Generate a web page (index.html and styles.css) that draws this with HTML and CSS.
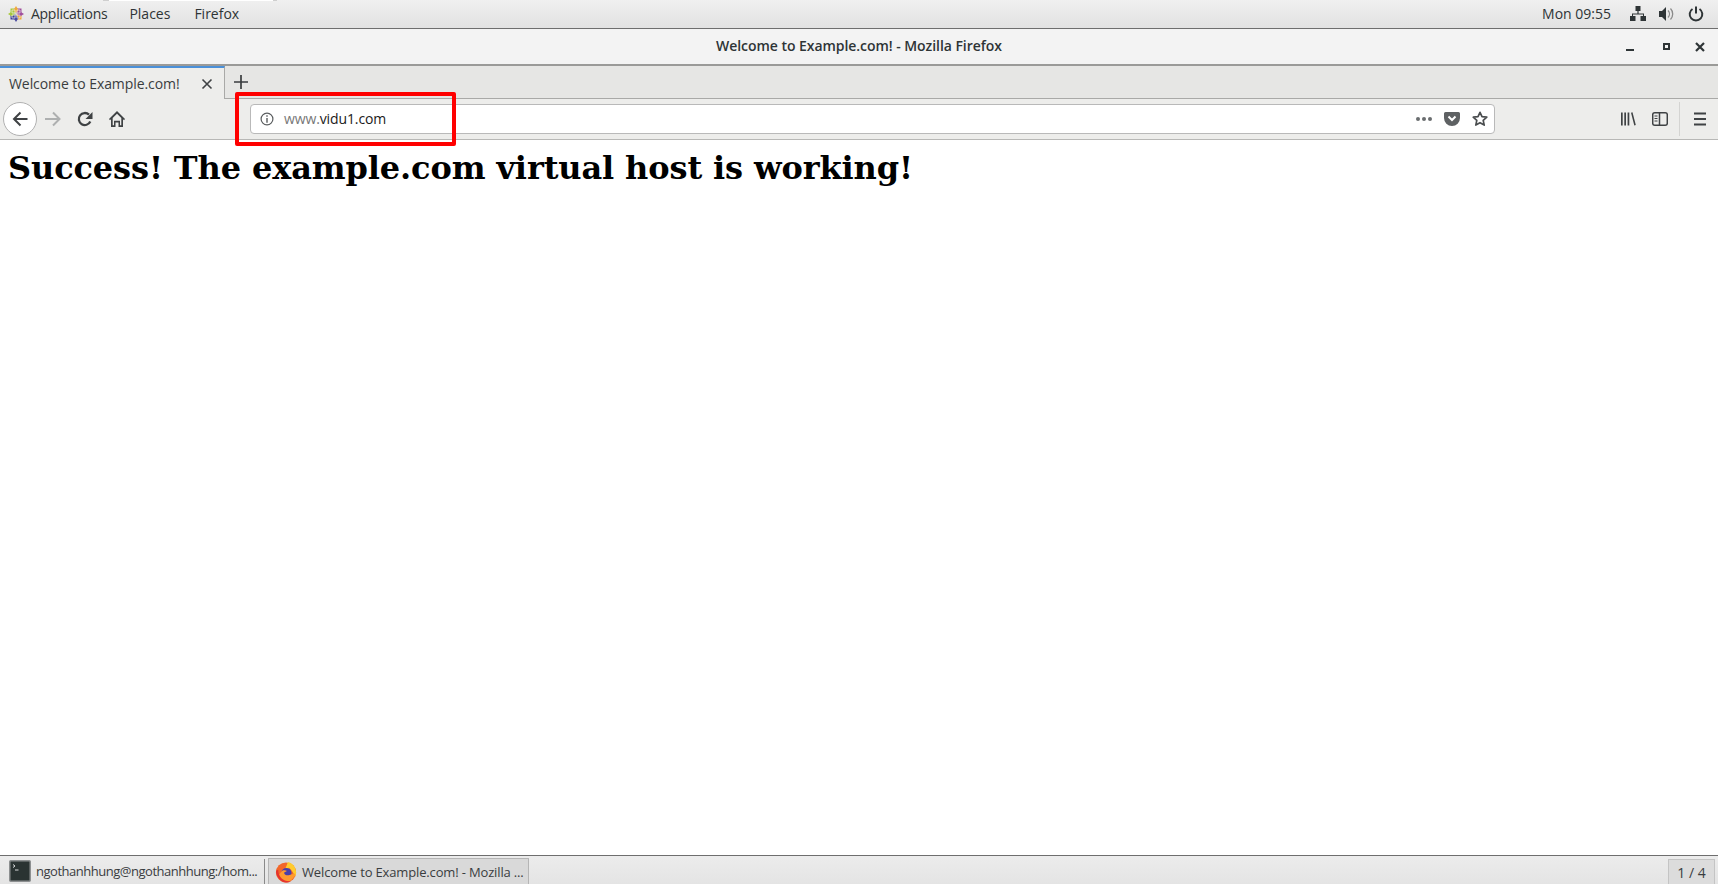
FILE: index.html
```html
<!DOCTYPE html>
<html lang="en">
<head>
<meta charset="utf-8">
<title>Welcome to Example.com! - Mozilla Firefox</title>
<link rel="stylesheet" href="styles.css">
</head>
<body>
<div class="desktop">
  <header class="topbar">
    <div class="topbar-left">
      <svg class="apps-logo" viewBox="0 0 16 16" width="16" height="16">
        <path fill="#a8c83c" d="M2.500 2.500h5v5h-5z"/>
        <path fill="#a04f9c" d="M8.500 2.500h5v5h-5z"/>
        <path fill="#f0a93a" d="M8.500 8.500h5v5h-5z"/>
        <path fill="#3f3f96" d="M2.500 8.500h5v5h-5z"/>
        <path fill="#f0a93a" d="M5.500 4 8 0l2.500 4L8 7z"/>
        <path fill="#a8c83c" d="M4 10.500 0 8l4-2.500L7 8z"/>
        <path fill="#a04f9c" d="M12 5.500 16 8l-4 2.500L9 8z"/>
        <path fill="#4a4aa0" d="M10.500 12 8 16l-2.500-4L8 9z"/>
        <path fill="none" stroke="#eee" stroke-width=".7" d="M4 4h3v3H4zM9 4h3v3H9zM9 9h3v3H9zM4 9h3v3H4z"/>
      </svg>
      <span class="menu-item apps">Applications</span>
      <span class="menu-item places">Places</span>
      <span class="menu-item">Firefox</span>
    </div>
    <div class="topbar-right">
      <span class="clock">Mon 09:55</span>
      <svg class="tray net" viewBox="0 0 16 16" width="16" height="16"><path fill="#2e3436" d="M5.500 0h5v5H8.600v2.400h5.400V10H16v5h-5.500v-5H13V8.500H3V10h2.500v5H0v-5h2V7.400h5.400V5H5.500z"/></svg>
      <svg class="tray vol" viewBox="0 0 16 16" width="16" height="16"><path fill="#2e3436" d="M0 5h3l4-4v14l-4-4H0z"/><path fill="none" stroke="#8a8a8a" stroke-width="1.300" d="M9 4.500a5 5 0 0 1 0 7M11.500 2.500a8 8 0 0 1 0 11"/></svg>
      <svg class="tray pow" viewBox="0 0 16 16" width="16" height="16"><path fill="none" stroke="#2e3436" stroke-width="2" d="M8 0.500v7M4.500 3a6.300 6.300 0 1 0 7 0"/></svg>
    </div>
  </header>

  <div class="titlebar">
    <span class="title">Welcome to Example.com! - Mozilla Firefox</span>
    <div class="win-controls">
      <span class="wc min"></span>
      <span class="wc max"></span>
      <svg class="wc-close" viewBox="0 0 10 10" width="10" height="10"><path stroke="#2e3436" stroke-width="2.200" d="M1 1l8 8M9 1l-8 8"/></svg>
    </div>
  </div>

  <div class="tabstrip">
    <div class="tab">
      <span class="tab-label">Welcome to Example.com!</span>
      <svg class="tab-close" viewBox="0 0 12 12" width="12" height="12"><path stroke="#3f4244" stroke-width="1.600" d="M1.500 1.500l9 9M10.500 1.500l-9 9"/></svg>
    </div>
    <svg class="newtab" viewBox="0 0 14 14" width="14" height="14"><path stroke="#3a3d3f" stroke-width="1.700" d="M7 0v14M0 7h14"/></svg>
  </div>

  <div class="toolbar">
    <span class="back">
      <svg viewBox="0 0 16 16" width="16" height="16"><path fill="none" stroke="#3f4244" stroke-width="2" d="M15.500 8H2M8.500 1.500 2 8l6.500 6.500"/></svg>
    </span>
    <svg class="fwd" viewBox="0 0 16 16" width="16" height="16"><path fill="none" stroke="#aeb0b0" stroke-width="2" d="M0 8h14M8 1.500 14.500 8 8 14.500"/></svg>
    <svg class="reload" viewBox="0 0 16 16" width="16" height="16"><path fill="none" stroke="#3f4244" stroke-width="2.300" d="M13.300 10.500A6 6 0 1 1 12 3.700"/><path fill="#3f4244" d="M15.500 1v7H8.500z"/></svg>
    <svg class="home" viewBox="0 0 16 16" width="16" height="16"><path fill="#3f4244" d="M8 0 16 8l-1 1.200-1-1V16H9.500v-4.500h-3V16H2V8.200l-1 1L0 8zM8 2.800 3.700 7v7.300H5v-4.500h6v4.500h1.300V7z"/></svg>
    <div class="urlbar">
      <svg class="info" viewBox="0 0 14 14" width="14" height="14"><circle cx="7" cy="7" r="5.900" fill="none" stroke="#5a5d5f" stroke-width="1.200"/><path fill="#5a5d5f" d="M6.300 3.300h1.400v1.400H6.300zM6.300 6h1.400v4.700H6.300z"/></svg>
      <span class="url"><span class="url-sub">www.</span>vidu1.com</span>
      <span class="url-spacer"></span>
      <span class="dots"><i></i><i></i><i></i></span>
      <svg class="pocket" viewBox="0 0 16 14" width="16" height="14"><path fill="#5e6163" d="M1.500 0h13A1.500 1.500 0 0 1 16 1.500V6A8 8 0 0 1 0 6V1.500A1.500 1.500 0 0 1 1.500 0z"/><path fill="none" stroke="#fff" stroke-width="2" d="M4.500 4.500 8 8l3.500-3.500"/></svg>
      <svg class="star" viewBox="0 0 16 16" width="16" height="16"><path fill="none" stroke="#4a4d4f" stroke-width="1.700" stroke-linejoin="round" d="M8 1.300l2 4.400 4.800.5-3.600 3.200 1 4.700L8 11.700l-4.200 2.400 1-4.700L1.200 6.200 6 5.700z"/></svg>
    </div>
    <svg class="library" viewBox="0 0 16 16" width="16" height="16"><path fill="#3f4244" d="M1 1.500h1.700v13H1zM4.300 1.500H6v13H4.300zM7.600 1.500h1.700v13H7.600zM11 1.800l1.500-.5 3.300 12.800-1.500.5z"/></svg>
    <svg class="sidebar" viewBox="0 0 16 16" width="16" height="16"><rect x=".7" y="1.700" width="14.600" height="12.600" rx="2" fill="none" stroke="#3f4244" stroke-width="1.500"/><path fill="none" stroke="#3f4244" stroke-width="1.500" d="M7.500 2v12"/><path stroke="#3f4244" d="M2.500 5h3M2.500 7.500h3M2.500 10h3"/></svg>
    <span class="tb-sep"></span>
    <svg class="hamburger" viewBox="0 0 14 14" width="14" height="14"><path stroke="#3f4244" stroke-width="1.800" d="M1 1.500h12M1 7h12M1 12.500h12"/></svg>
  </div>

  <main class="content">
    <h1>Success! The example.com virtual host is working!</h1>
  </main>

  <footer class="taskbar">
    <div class="task term">
      <svg viewBox="0 0 22 22" width="22" height="22" class="term-icon"><rect x=".75" y=".75" width="20.500" height="20.500" rx="1" fill="#2a3332" stroke="#8c8f90" stroke-width="1.500"/><path stroke="#d8dadb" stroke-width="1" fill="none" d="M4 4.500l2 1.500-2 1.500M6 10h3.500"/></svg>
      <span class="task-label">ngothanhhung@ngothanhhung:/hom...</span>
    </div>
    <span class="task-sep"></span>
    <div class="task active">
      <svg viewBox="0 0 24 24" width="22" height="22" class="fx-icon">
        <circle cx="12" cy="12.500" r="11" fill="#f2672a"/>
        <path fill="#ffcb2e" d="M14 1c5 1 9 5.500 9 11.500 0 2-.5 3.500-1.300 5-.7-3.500-3-7.500-6.700-10.500 .5 2-1 3-3.500 2.500C10.500 9 13 5 14 1z"/>
        <circle cx="12.500" cy="13" r="5.500" fill="#4a3fa8"/>
        <path fill="#ff9a2e" d="M8 10.500c2-1 4-.5 5 .5-1 1-3 1-3 2 0 2 3 3 5 2.500 3-.8 5-2 7-1.500-1 5-5 9-10 9-4 0-8-2.500-9.500-6.500C5 15 6 12 8 10.500z"/>
        <path fill="#e4332e" d="M1.200 11C.7 17 6 23.500 12 23.500c2 0 4-.5 5.500-1.500C10 23 3.500 18 3.500 9.500 2.500 10 1.500 10 1.200 11z"/>
      </svg>
      <span class="task-label">Welcome to Example.com! - Mozilla ...</span>
    </div>
    <span class="task-spacer"></span>
    <div class="pager">1 / 4</div>
  </footer>

  <div class="top-edge"></div>
  <div class="highlight"></div>
</div>
</body>
</html>
```

FILE: styles.css
```css
* { box-sizing: border-box; }
html, body { margin: 0; padding: 0; height: 100%; overflow: hidden; }
body { background: #fff; font-family: "Open Sans", "Noto Sans", sans-serif; color: #2e3436; }
.desktop { position: relative; width: 1718px; height: 884px; display: flex; flex-direction: column; }

.topbar {
  height: 29px; flex: none; display: flex; align-items: center; justify-content: space-between;
  background: linear-gradient(#f0f0f0, #e2e2e2); border-bottom: 1px solid #6e6e6e;
  padding: 0 14px 1px 8px; font-size: 14px;
}
.topbar-left, .topbar-right { display: flex; align-items: center; }
.apps-logo { margin-right: 7px; }
.menu-item { margin-right: 22px; color: #2e3436; }
.apps { letter-spacing: -0.28px; }
.places { margin-right: 24px; }
.clock { margin-right: 19px; }
.tray { display: block; }
.net { margin-right: 13px; }
.vol { margin-right: 13px; }
.top-edge { position: absolute; left: 103px; top: 0; width: 174px; height: 1px; background: #fff; border-left: 6px solid #cfcfcf; border-right: 4px solid #cfcfcf; }

.titlebar {
  height: 37px; flex: none; position: relative; display: flex; align-items: center; justify-content: center;
  background: #f3f3f3; border-bottom: 2px solid #9a9a98; font-size: 14px; font-weight: 600; color: #2e3436;
}
.title { position: relative; top: -1px; letter-spacing: -0.05px; }
.win-controls { position: absolute; right: 12px; top: 0; height: 35px; display: flex; align-items: center; }
.wc { display: block; }
.min { width: 8px; height: 2px; background: #2e3436; margin-right: 29px; margin-top: 7px; }
.max { width: 7px; height: 7px; border: 2px solid #2e3436; margin-right: 25px; }
.wc-close { display: block; margin-top: 1px; margin-right: 1px; }

.tabstrip {
  height: 33px; flex: none; display: flex; align-items: center; background: #e6e6e4; border-bottom: 1px solid #a9a9a7;
}
.tab {
  width: 225px; height: 33px; flex: none; display: flex; align-items: center; justify-content: space-between;
  background: #ededeb; border-top: 2px solid #4a90d9; border-right: 1px solid #a9a9a7; padding: 0 11px 0 9px; font-size: 14px; color: #3a3d3f;
  align-self: flex-start; letter-spacing: -0.07px;
}
.newtab { margin-left: 9px; }

.toolbar {
  height: 41px; flex: none; display: flex; align-items: center; background: #ededeb; border-bottom: 1px solid #b8b8b6; padding: 0 0 0 3px;
}
.back {
  width: 34px; height: 34px; flex: none; border-radius: 50%; background: #fff; border: 1px solid #b1b1b1;
  display: flex; align-items: center; justify-content: center;
}
.fwd { margin-left: 8px; }
.reload { margin-left: 16px; }
.home { margin-left: 16px; margin-right: 125px; }
.urlbar {
  width: 1245px; height: 30px; flex: none; display: flex; align-items: center;
  background: #fff; border: 1px solid #b9b9b9; border-radius: 4px; padding: 0 6px 0 9px;
}
.info { flex: none; }
.url { margin-left: 10px; font-size: 14px; color: #1a1a1a; position: relative; top: -1px; letter-spacing: -0.12px; }
.url-sub { color: #777; }
.url-spacer { flex: 1; }
.dots { display: flex; gap: 2px; margin-right: 12px; }
.dots i { display: block; width: 4px; height: 4px; border-radius: 50%; background: #6a6d6f; }
.pocket { margin-right: 12px; }
.library { margin-left: 125px; }
.sidebar { margin-left: 16px; }
.tb-sep { width: 1px; height: 34px; background: #d4d4d2; margin-left: 11px; }
.hamburger { margin-left: 13px; }

.content { flex: 1; min-height: 0; background: #fff; padding: 10px 8px 8px; }
h1 { margin: 0; font-family: "DejaVu Serif", serif; font-weight: 700; font-size: 32px; line-height: 37px; color: #000; letter-spacing: -0.12px; }

.taskbar {
  height: 29px; flex: none; display: flex; align-items: stretch; background: linear-gradient(#ececec, #e4e4e4); border-top: 1px solid #6e6e6e; font-size: 13px;
  padding-top: 2px; letter-spacing: -0.15px;
}
.task { display: flex; align-items: center; padding: 0 0 0 9px; }
.term { width: 255px; flex: none; letter-spacing: -0.48px; }
.task-label { white-space: nowrap; color: #3a3d3f; }
.term-icon { margin-right: 5px; flex: none; }
.fx-icon { margin-right: 5px; flex: none; }
.task-sep { width: 1px; background: #8a8a8a; margin: 1px 3px 0 9px; }
.task.active { width: 261px; flex: none; background: #d9d9d9; border: 1px solid #b5b5b5; border-bottom: 0; padding-left: 6px; }
.task-spacer { flex: 1; }
.pager { width: 47px; margin: 1px 3px 0 0; display: flex; align-items: center; justify-content: center; background: #dcdcdc; border: 1px solid #c4c4c4; border-bottom: 0; color: #3a3d3f; font-size: 14px; letter-spacing: 0; }

.highlight { position: absolute; left: 235px; top: 92px; width: 221px; height: 54px; border: 4px solid #ff0000; border-radius: 2px; }
```
